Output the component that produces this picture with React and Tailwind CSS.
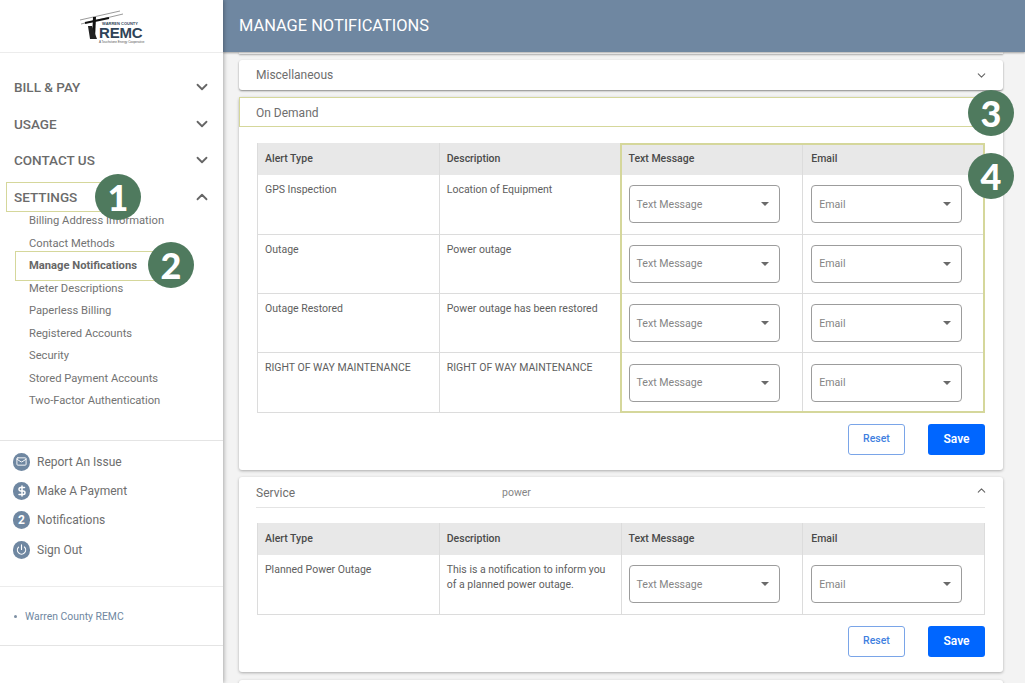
import React from 'react';
import { ChevronDown, ChevronUp, DollarSign, Mail, Power } from 'lucide-react';

const navItems = ['BILL & PAY', 'USAGE', 'CONTACT US'];
const settingsItems = [
  'Billing Address Information',
  'Contact Methods',
  'Manage Notifications',
  'Meter Descriptions',
  'Paperless Billing',
  'Registered Accounts',
  'Security',
  'Stored Payment Accounts',
  'Two-Factor Authentication',
];
const onDemandRows = [
  ['GPS Inspection', 'Location of Equipment'],
  ['Outage', 'Power outage'],
  ['Outage Restored', 'Power outage has been restored'],
  ['RIGHT OF WAY MAINTENANCE', 'RIGHT OF WAY MAINTENANCE'],
];

const Logo = () => (
  <div className="flex items-end h-[34px] w-[62px] relative -ml-[3px]">
    <svg width="44" height="34" viewBox="0 0 44 34" className="absolute left-0 top-0">
      <path d="M1 10 L41 1 M2 14 L44 4" stroke="#555" strokeWidth="0.6" fill="none" />
      <path d="M6 13 L30 8" stroke="#111" strokeWidth="2" fill="none" />
      <path d="M14 7 L17 7 L16 29 L13 29 Z" fill="#111" />
      <path d="M9 16 L13 16 L18 29 L11 29 Z" fill="#222" />
    </svg>
    <div className="absolute left-[20px] top-[11px] w-[42px] text-center leading-none font-['Liberation_Sans',sans-serif]">
      <div className="text-[4px] font-bold text-[#33475b] leading-[5px]">WARREN COUNTY</div>
      <div className="text-[15px] font-bold text-[#2f4358] leading-[14px] tracking-[-0.2px]">REMC</div>
      <div className="text-[3px] text-[#555] leading-[4px] whitespace-nowrap">A Touchstone Energy Cooperative</div>
    </div>
  </div>
);

const Badge = ({ n, className }) => (
  <div
    className={`absolute w-[46px] h-[46px] rounded-full bg-[#4f7a5e] text-white flex items-center justify-center text-[36px] font-black font-['Lato',sans-serif] ${className}`}
  >
    {n}
  </div>
);

const FooterLink = ({ icon, label }) => (
  <div className="flex items-center gap-[7px] h-[29.3px] pl-[13px]">
    <span className="w-[17px] h-[18px] rounded-full bg-[#6f87a1] text-white flex items-center justify-center text-[12px] font-bold shrink-0">
      {icon}
    </span>
    <span className="text-[12px] text-[#6e6e6e]">{label}</span>
  </div>
);

const Sidebar = () => (
  <aside className="w-[223px] shrink-0 bg-white h-full shadow-[1px_0_4px_rgba(0,0,0,0.3)] z-10 flex flex-col">
    <div className="h-[53px] border-b border-[#ececec] flex justify-center pt-[10px] shrink-0">
      <Logo />
    </div>
    <nav className="pt-[16px] h-[388px] border-b border-[#e4e4e4] shrink-0">
      {navItems.map((item) => (
        <div key={item} className="flex items-center justify-between h-[36.6px] pl-[14px] pr-[12px]">
          <span className="text-[13.5px] font-medium text-[#6b6b6b]">{item}</span>
          <ChevronDown size={18} strokeWidth={2.4} className="text-[#666]" />
        </div>
      ))}
      <div className="flex items-center justify-between h-[36.6px] pl-[14px] pr-[12px] relative">
        <span className="text-[13.5px] font-medium text-[#6b6b6b]">SETTINGS</span>
        <ChevronUp size={18} strokeWidth={2.4} className="text-[#666]" />
        <div className="absolute left-[6px] top-[3px] w-[100px] h-[30px] border border-[#d5d79b]" />
      </div>
      <ul className="-mt-[5px]">
        {settingsItems.map((item) => (
          <li
            key={item}
            className={`h-[22.5px] leading-[22.5px] pl-[29px] text-[11.2px] relative ${
              item === 'Manage Notifications' ? 'font-bold text-[#666]' : 'text-[#737373]'
            }`}
          >
            {item}
            {item === 'Manage Notifications' && (
              <div className="absolute left-[15px] top-[-4px] w-[142px] h-[30px] border border-[#d5d79b]" />
            )}
          </li>
        ))}
      </ul>
    </nav>
    <div className="h-[146px] pt-[6px] border-b border-[#ececec] shrink-0">
      <FooterLink icon={<Mail size={11} strokeWidth={2} />} label="Report An Issue" />
      <FooterLink icon={<DollarSign size={12} strokeWidth={3} />} label="Make A Payment" />
      <FooterLink icon="2" label="Notifications" />
      <FooterLink icon={<Power size={11} strokeWidth={2.5} />} label="Sign Out" />
    </div>
    <div className="h-[59px] flex items-center pl-[14px] gap-[8px] border-b border-[#e4e4e4] shrink-0 pt-[1px]">
      <span className="w-[3px] h-[3px] bg-[#7d8fa3] rounded-full" />
      <span className="text-[10.4px] text-[#6f87a1]">Warren County REMC</span>
    </div>
  </aside>
);

const Select = ({ label }) => (
  <div className="w-[151px] h-[38px] border border-[#9c9c9c] rounded-[4px] flex items-center justify-between pl-[7px] pr-[10px] bg-white">
    <span className="text-[10.6px] text-[#858585] pt-[1px]">{label}</span>
    <span className="w-0 h-0 border-x-[4px] border-x-transparent border-t-[4px] border-t-[#6a6a6a]" />
  </div>
);

const AlertTable = ({ rows, rowClass, highlight }) => (
  <div className="relative w-[728px]">
    <table className="w-full table-fixed border-collapse text-[10.5px]">
      <thead>
        <tr className="bg-[#e8e8e8] h-[32px] text-left text-[#4a4a4a]">
          <th className="font-medium px-[7px] border-x border-[#dcdcdc] align-middle">Alert Type</th>
          <th className="font-medium px-[7px] border-x border-[#dcdcdc] align-middle">Description</th>
          <th className="font-medium px-[7px] border-x border-[#dcdcdc] align-middle">Text Message</th>
          <th className="font-medium px-[8px] border-x border-[#dcdcdc] align-middle">Email</th>
        </tr>
      </thead>
      <tbody>
        {rows.map(([type, desc]) => (
          <tr key={type} className={`border-b border-[#dcdcdc] ${rowClass}`}>
            <td className="px-[7px] pt-[7px] align-top text-[#5e5e5e] border-x border-[#dcdcdc] leading-[15px]">{type}</td>
            <td className="px-[7px] pt-[7px] align-top text-[#5e5e5e] border-x border-[#dcdcdc] leading-[15px]">{desc}</td>
            <td className="px-[7px] align-middle border-x border-[#dcdcdc]">
              <Select label="Text Message" />
            </td>
            <td className="px-[8px] align-middle border-x border-[#dcdcdc]">
              <Select label="Email" />
            </td>
          </tr>
        ))}
      </tbody>
    </table>
    {highlight && <div className="absolute right-0 top-0 bottom-0 w-[365px] border-2 border-[#d5d79b] pointer-events-none" />}
  </div>
);

const Actions = () => (
  <div className="flex justify-end gap-[23px] mt-[11px]">
    <button className="w-[57px] h-[31px] border border-[#7aa5e8] rounded-[3px] text-[10.5px] font-medium text-[#3f7fe0] bg-white">
      Reset
    </button>
    <button className="w-[57px] h-[31px] rounded-[3px] text-[12px] font-semibold text-white bg-[#0066ff]">Save</button>
  </div>
);

const App = () => (
  <div className="relative flex w-[1025px] h-[683px] overflow-hidden bg-[#f3f3f3] font-['Roboto',sans-serif]">
    <Sidebar />
    <main className="flex-1 min-w-0">
      <header className="h-[52px] bg-[#6f87a1] flex items-center pl-[16px] pt-[1px] text-[16.4px] text-white shadow-[0_1px_2px_rgba(0,0,0,0.35)] relative z-[1]">
        MANAGE NOTIFICATIONS
      </header>
      <div className="pl-[16px] w-[780px]">
        <div className="h-[2px] bg-white shadow-[0_1px_2px_rgba(0,0,0,0.3)] mb-[6px]" />
        <section className="h-[30px] bg-white rounded-[3px] shadow-[0_1px_2px_rgba(0,0,0,0.45)] flex items-center justify-between pl-[17px] pr-[15px] text-[12px] text-[#6e6e6e]">
          Miscellaneous
          <ChevronDown size={13} strokeWidth={2} className="text-[#666]" />
        </section>
        <section className="mt-[7px] h-[373px] bg-white rounded-[3px] shadow-[0_1px_3px_rgba(0,0,0,0.3)]">
          <div className="h-[30px] border border-[#d5d79b] flex items-center pl-[16px] pt-[1px] text-[12px] text-[#6e6e6e]">On Demand</div>
          <div className="pl-[18px] pt-[16px]">
            <AlertTable rows={onDemandRows} rowClass="h-[59.3px]" highlight />
            <div className="w-[728px]">
              <Actions />
            </div>
          </div>
        </section>
        <section className="mt-[7px] h-[195px] bg-white rounded-[3px] shadow-[0_1px_3px_rgba(0,0,0,0.3)] pl-[17px]">
          <div className="h-[31px] w-[729px] border-b border-[#e4e4e4] flex items-center pt-[2px] text-[12px] text-[#6e6e6e]">
            <span className="w-[246px]">Service</span>
            <span className="text-[10.5px] text-[#858585] flex-1">power</span>
            <ChevronUp size={13} strokeWidth={2} className="text-[#666] -mr-[3px] -mt-[5px]" />
          </div>
          <div className="pt-[15px] pl-[1px]">
            <AlertTable rows={[['Planned Power Outage', 'This is a notification to inform you of a planned power outage.']]} rowClass="h-[59px]" />
            <div className="w-[728px]">
              <Actions />
            </div>
          </div>
        </section>
        <section className="mt-[8px] h-[30px] bg-white rounded-[3px] shadow-[0_1px_3px_rgba(0,0,0,0.3)]" />
      </div>
    </main>
    <Badge n="1" className="z-20 left-[95px] top-[174px]" />
    <Badge n="2" className="z-20 left-[148px] top-[242px]" />
    <Badge n="3" className="z-20 left-[968px] top-[90px]" />
    <Badge n="4" className="z-20 left-[968px] top-[153px]" />
  </div>
);

export default App;
